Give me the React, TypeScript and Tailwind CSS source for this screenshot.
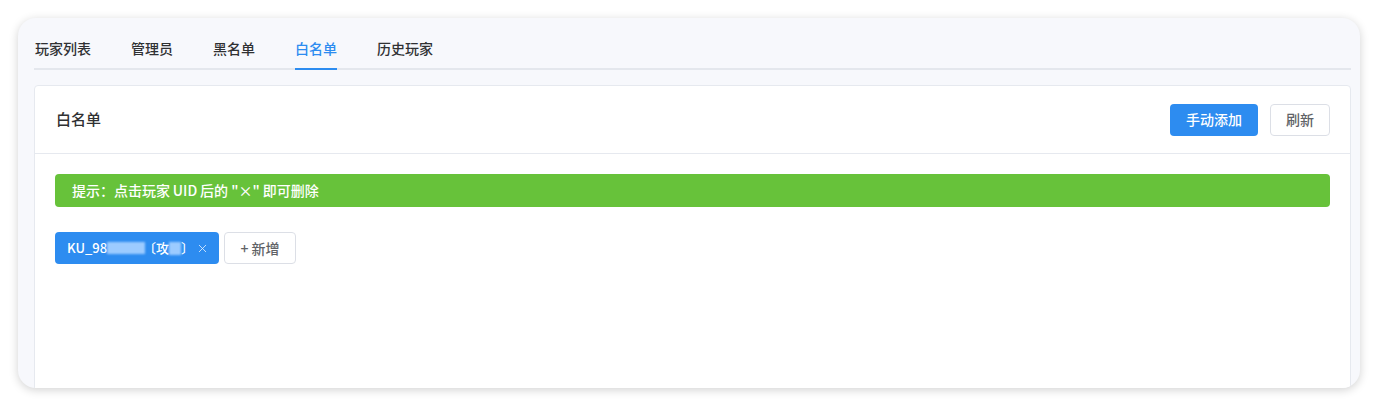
import { X } from "lucide-react";

const tabs = ["玩家列表", "管理员", "黑名单", "白名单", "历史玩家"];

export default function App() {
  return (
    <div
      className="w-[1378px] h-[407px] bg-white p-[18px]"
      style={{ fontFamily: '"Noto Sans CJK SC", "Noto Sans", sans-serif' }}
    >
      <div className="h-[370px] rounded-[18px] bg-[#f7f8fc] shadow-[0_2px_10px_rgba(0,0,0,0.18)] overflow-hidden pl-[16px] pr-[9px] pt-[10px]">
        {/* tabs */}
        <div className="flex gap-[40px] border-b-2 border-[#e4e7ed] h-[42px] pl-[1px]">
          {tabs.map((t) => (
            <div
              key={t}
              className={
                t === "白名单"
                  ? "text-[14px] font-medium text-[#2d8cf0] leading-[40px] border-b-2 border-[#2d8cf0] -mb-[2px]"
                  : "text-[14px] font-medium text-[#303133] leading-[40px]"
              }
            >
              {t}
            </div>
          ))}
        </div>

        {/* card */}
        <div className="mt-[15px] bg-white border border-[#e6e9ef] rounded-[4px] h-[320px]">
          <div className="h-[68px] flex items-center justify-between pl-[21px] pr-[20px] border-b border-[#e6e9ef]">
            <div className="text-[15px] font-medium text-[#303133]">白名单</div>
            <div className="flex gap-[12px]">
              <button className="h-[32px] w-[88px] rounded-[4px] bg-[#2d8cf0] text-white text-[14px] font-medium">
                手动添加
              </button>
              <button className="h-[32px] w-[60px] rounded-[4px] border border-[#dcdfe6] bg-white text-[#606266] text-[14px] font-medium">
                刷新
              </button>
            </div>
          </div>
          <div className="px-[20px] pt-[20px]">
            <div className="h-[33px] rounded-[4px] bg-[#67c23a] text-white text-[14px] font-medium flex items-center px-[17px]">
              提示：点击玩家{"\u2009"}UID{"\u2009"}后的 "×" 即可删除
            </div>
            <div className="mt-[25px] flex gap-[5px]">
              <div className="h-[32px] w-[164px] rounded-[4px] bg-[#2d8cf0] text-white text-[13px] font-medium flex items-center pl-[12px] pr-[10px] overflow-hidden">
                <span>KU_98</span>
                <span className="inline-block w-[38px] h-[12px] bg-[#9ccbff] blur-[1px]" />
                <span className="-ml-[2px]">〔攻</span>
                <span className="inline-block w-[12px] h-[13px] bg-[#9ccbff] blur-[1px]" />
                <span className="-mr-[6px]">〕</span>
                <X size={13} strokeWidth={1.5} className="ml-auto text-[#e6f1ff] shrink-0" />
              </div>
              <div className="h-[32px] w-[72px] rounded-[4px] border border-[#dcdfe6] bg-white text-[#606266] text-[14px] font-medium flex items-center justify-center">
                + 新增
              </div>
            </div>
          </div>
        </div>
      </div>
    </div>
  );
}
